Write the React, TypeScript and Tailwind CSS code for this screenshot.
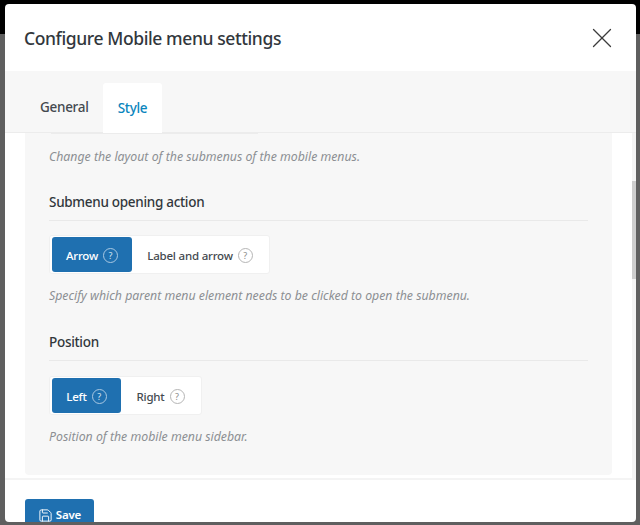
import React from 'react';
import { Save, X } from 'lucide-react';

const Help = ({ active }: { active?: boolean }) => (
  <span
    className={`mt-[1px] flex h-[15px] w-[15px] shrink-0 items-center justify-center rounded-full border text-[9px] leading-none font-normal tracking-normal ${
      active ? 'border-[#a9c8e2] text-[#d5e5f2]' : 'border-[#b5b5b5] text-[#8a8a8a]'
    }`}
  >
    ?
  </span>
);

const Segmented = ({ options }: { options: { label: string; w: string; active?: boolean }[] }) => (
  <div className="flex h-[39px] w-fit items-center rounded-[3px] border border-[#f0f0f0] bg-white pl-[2px] pr-[1px]">
    {options.map((o) => (
      <div
        key={o.label}
        className={`flex h-[35px] items-center justify-center gap-[5px] rounded-[3px] text-[11.5px] font-medium tracking-[-0.2px] ${o.w} ${
          o.active ? 'bg-[#1f70b0] text-white' : 'text-[#44494f]'
        }`}
      >
        <span className="pt-[2px]">{o.label}</span>
        <Help active={o.active} />
      </div>
    ))}
  </div>
);

const Heading = ({ children }: { children: React.ReactNode }) => (
  <div className="h-[29px] border-b border-[#e9e9e9] pt-[1px] text-[13.5px] leading-[19px] font-medium tracking-[-0.3px] text-[#32373c]">
    {children}
  </div>
);

const Hint = ({ children }: { children: React.ReactNode }) => (
  <p className="text-[12.3px] leading-[18px] text-[#8c8f93] italic">{children}</p>
);

export default function App() {
  return (
    <div className="relative h-[525px] w-[640px] overflow-hidden bg-[#5f5f5f] font-['Noto_Sans',sans-serif]">
      <div className="absolute inset-x-0 top-0 h-[34px] bg-black" />
      <div className="relative mt-[4px] ml-[5px] flex h-[518px] w-[631px] flex-col overflow-hidden rounded-[4px] bg-white">
        <header className="flex h-[67px] shrink-0 items-center justify-between pr-[17px] pl-[19px]">
          <h2 className="pt-[1px] text-[17.5px] font-medium tracking-[-0.4px] text-[#32373c]">Configure Mobile menu settings</h2>
          <X className="h-[34px] w-[34px] text-[#3c3c3c]" strokeWidth={0.9} />
        </header>

        <nav className="flex h-[62px] shrink-0 items-end border-b border-[#ececec] bg-[#f7f7f7] pl-[20px]">
          <div className="flex h-[49px] w-[78px] items-center pl-[15px] text-[13.5px] font-medium tracking-[-0.3px] text-[#44494f]">
            General
          </div>
          <div className="-mb-px flex h-[50px] w-[59px] items-center justify-center rounded-t-[3px] bg-white text-[13.5px] font-medium tracking-[-0.3px] text-[#0a85bd]">
            Style
          </div>
        </nav>

        <div className="flex min-h-0 flex-1">
          <div className="min-w-0 flex-1 px-[20px]">
            <section className="h-[342px] rounded-b-[4px] bg-[#f7f7f7] px-[24px]">
              <div className="ml-[2px] h-px w-[207px] bg-[#ececec]" />
              <div className="pt-[14px]"><Hint>Change the layout of the submenus of the mobile menus.</Hint></div>

              <div className="pt-[26px]">
                <Heading>Submenu opening action</Heading>
              </div>
              <div className="pt-[14px]">
                <Segmented
                  options={[
                    { label: 'Arrow', w: 'w-[80px]', active: true },
                    { label: 'Label and arrow', w: 'w-[136px]' },
                  ]}
                />
              </div>
              <div className="pt-[13px]"><Hint>Specify which parent menu element needs to be clicked to open the submenu.</Hint></div>

              <div className="pt-[27px]">
                <Heading>Position</Heading>
              </div>
              <div className="pt-[15px]">
                <Segmented
                  options={[
                    { label: 'Left', w: 'w-[69px]', active: true },
                    { label: 'Right', w: 'w-[79px]' },
                  ]}
                />
              </div>
              <div className="pt-[13px]"><Hint>Position of the mobile menu sidebar.</Hint></div>
            </section>
          </div>
          <div className="w-[4px] shrink-0 bg-[#f4f4f4] pt-[48px]">
            <div className="h-[98px] bg-[#cdcdcd]" />
          </div>
        </div>

        <footer className="h-[44px] shrink-0 border-t-2 border-[#f4f4f4] pt-[19px] pl-[20px]">
          <button className="flex h-[40px] w-[69px] items-start justify-center gap-[3px] rounded-[3px] bg-[#1f70b0] pt-[9px] text-[11.5px] leading-[14px] font-semibold tracking-[-0.2px] text-white">
            <Save className="h-[15px] w-[15px]" strokeWidth={1.5} />
            Save
          </button>
        </footer>
      </div>
    </div>
  );
}
